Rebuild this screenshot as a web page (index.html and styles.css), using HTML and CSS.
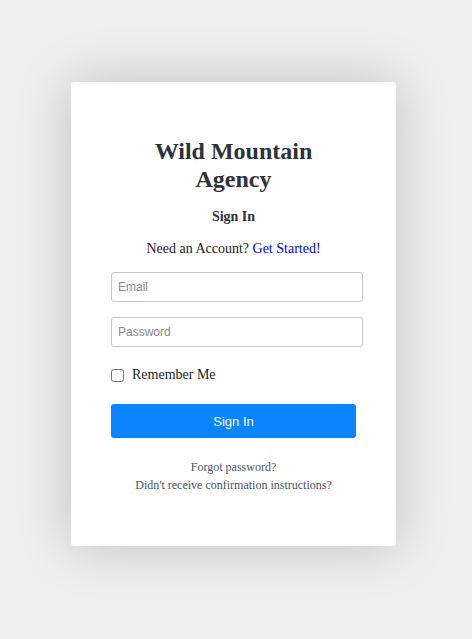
FILE: index.html
```html
<!DOCTYPE html>
<html>
<head>
<meta charset="utf-8">
<link rel="stylesheet" href="styles.css">
</head>
<body>
<div class="page">
  <div class="card">
    <h1 class="title">Wild Mountain Agency</h1>
    <h2 class="subtitle">Sign In</h2>
    <p class="need">Need an Account? <a class="start" href="#">Get Started!</a></p>
    <form class="form">
      <input class="field" type="text" placeholder="Email">
      <input class="field" type="password" placeholder="Password">
      <label class="remember"><input class="check" type="checkbox"> Remember Me</label>
      <button class="btn" type="button">Sign In</button>
    </form>
    <div class="links">
      <a class="small-link" href="#">Forgot password?</a>
      <a class="small-link" href="#">Didn't receive confirmation instructions?</a>
    </div>
  </div>
</div>
</body>
</html>
```
FILE: styles.css
```css
html, body {
  margin: 0;
  padding: 0;
  background: #efefef;
  font-family: "Liberation Serif", "Times New Roman", serif;
}
.page {
  padding: 82px 0 0 71px;
  height: 639px;
  box-sizing: border-box;
}
.card {
  width: 325px;
  height: 464px;
  box-sizing: border-box;
  background: #fff;
  border-radius: 3px;
  box-shadow: 0 0 55px rgba(0,0,0,0.2);
  padding: 55px 40px 0 40px;
  display: flex;
  flex-direction: column;
  align-items: stretch;
}
.title {
  margin: 0 auto;
  max-width: 200px;
  text-align: center;
  font-size: 24px;
  line-height: 28px;
  font-weight: bold;
  color: #2d3338;
}
.subtitle {
  margin: 15px 0 0;
  text-align: center;
  font-size: 14px;
  line-height: 18px;
  font-weight: bold;
  color: #2d3338;
}
.need {
  margin: 14px 0 0;
  text-align: center;
  font-size: 14px;
  line-height: 18px;
  color: #222;
}
.start {
  color: #0000ee;
  text-decoration: none;
}
.form {
  margin-top: 14px;
  display: flex;
  flex-direction: column;
}
.field {
  width: 252px;
  height: 30px;
  box-sizing: border-box;
  margin: 0 0 15px;
  padding: 0 6px;
  border: 1px solid #c8c8c8;
  border-radius: 3px;
  font-family: "Liberation Sans", Arial, sans-serif;
  font-size: 12px;
  color: #333;
  background: #fff;
}
.field::placeholder {
  color: #8a8a8a;
}
.remember {
  display: flex;
  align-items: center;
  margin-top: 3px;
  font-size: 14px;
  line-height: 20px;
  color: #222;
}
.check {
  width: 13px;
  height: 13px;
  margin: 0 8px 0 0;
}
.btn {
  margin-top: 19px;
  width: 245px;
  height: 34px;
  border: none;
  border-radius: 3px;
  background: #0a84ff;
  color: #fff;
  font-family: "Liberation Sans", Arial, sans-serif;
  font-size: 13px;
}
.links {
  margin-top: 20px;
  display: flex;
  flex-direction: column;
  align-items: center;
  width: 245px;
}
.small-link {
  font-size: 12px;
  line-height: 18px;
  color: #4a5568;
  text-decoration: none;
}
```
